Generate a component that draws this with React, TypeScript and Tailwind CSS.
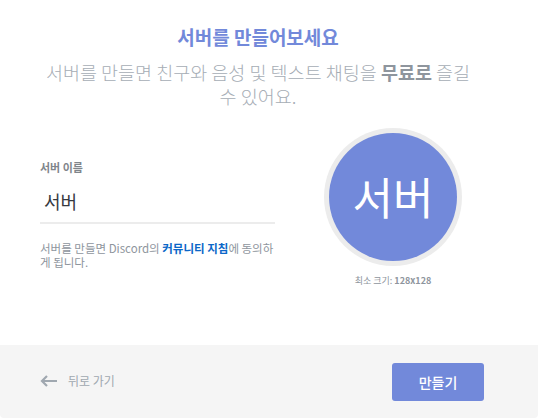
import React from 'react';

const font = { fontFamily: '"Noto Sans CJK KR", "Noto Sans", sans-serif' };

export default function App() {
  return (
    <div className="w-[538px] h-[418px] bg-white flex flex-col overflow-hidden rounded-[4px]" style={font}>
      <div className="flex-1 flex flex-col">
        <div className="pt-[26px] pr-[22px] text-center text-[19px] leading-[22px] font-bold text-[#7289da]">
          서버를 만들어보세요
        </div>
        <div className="mt-[12px] pl-[40px] pr-[62px] text-center text-[18.5px] leading-[24px] font-light text-[#a6adb5]">
          서버를 만들면 친구와 음성 및 텍스트 채팅을 <span className="font-bold text-[#8e959d]">무료로</span> 즐길 수 있어요.
        </div>
        <div className="flex mt-[20px] px-[40px]">
          <div className="w-[235px] pt-[32px]">
            <div className="text-[11px] leading-[14px] font-bold text-[#80858b]">서버 이름</div>
            <div className="mt-[15px] pl-[4px] pb-[9px] border-b-2 border-[#ececec] text-[18px] leading-[24px] text-[#36393f]">
              서버
            </div>
            <div className="mt-[17px] text-[11.5px] leading-[14px] text-[#8e959d]">
              서버를 만들면 Discord의 <span className="font-bold text-[#0b67c8]">커뮤니티 지침</span>에 동의하게 됩니다.
            </div>
          </div>
          <div className="flex-1 flex flex-col items-center pl-[13px]">
            <div className="w-[138px] h-[138px] rounded-full bg-[#ececec] flex items-center justify-center">
              <div className="w-[128px] h-[128px] rounded-full bg-[#7289da] flex items-center justify-center text-white text-[44px] leading-none pb-[3px]">
                서버
              </div>
            </div>
            <div className="mt-[9px] text-[9px] leading-[12px] text-[#8e959d]">
              최소 크기: <span className="font-bold">128x128</span>
            </div>
          </div>
        </div>
      </div>
      <div className="h-[73px] bg-[#f5f5f5] flex items-center justify-between px-[40px] pt-[1px]">
        <div className="flex items-center gap-[10px] text-[12px] text-[#a0a8b0] mt-[-2px]">
          <svg width="18" height="12" viewBox="0 0 18 12" fill="none" stroke="#a0a8b0" strokeWidth="2.2">
            <path d="M17 6H2" />
            <path d="M7 1L2 6l5 5" />
          </svg>
          <span>뒤로 가기</span>
        </div>
        <button className="w-[92px] h-[38px] mr-[14px] rounded-[3px] bg-[#7289da] text-white text-[14px] font-medium">
          만들기
        </button>
      </div>
    </div>
  );
}
